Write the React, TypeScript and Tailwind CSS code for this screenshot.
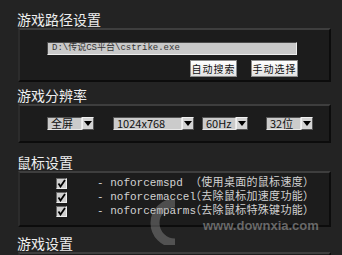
import React from "react";

const CJK = { fontFamily: '"Noto Sans CJK SC", "Noto Sans", sans-serif' };
const MONO = { fontFamily: '"Liberation Mono", "Noto Sans CJK SC", monospace' };

function Title({ children, className }: { children: React.ReactNode; className: string }) {
  return (
    <div className={`ml-[17px] h-[18px] leading-[18px] text-[14px] text-[#eeeeee] ${className}`} style={CJK}>
      {children}
    </div>
  );
}

function Panel({ children, className }: { children?: React.ReactNode; className: string }) {
  return (
    <div
      className={`ml-[18px] w-[313px] bg-[#1c1c1c] border-2 border-t-[#3e3e3e] border-l-[#2c2c2c] border-r-[#0c0c0c] border-b-[#0c0c0c] ${className}`}
    >
      {children}
    </div>
  );
}

function Arrow() {
  return (
    <div className="w-[12px] h-[13px] bg-[#d4d4d4] border border-t-[#f0f0f0] border-l-[#f0f0f0] border-r-[#555] border-b-[#555] flex items-center justify-center">
      <svg width="8" height="5" viewBox="0 0 8 5">
        <path d="M0 0H8L4 5Z" fill="#000" />
      </svg>
    </div>
  );
}

function Select({ label, className }: { label: string; className: string }) {
  return (
    <div className="flex h-[13px]">
      <div
        className={`h-[13px] bg-[#cbcbcb] border border-t-[#555] border-l-[#555] border-b-[#e8e8e8] border-r-[#e8e8e8] text-[11px] leading-[11px] pl-[3px] text-[#111] whitespace-nowrap ${className}`}
        style={CJK}
      >
        {label}
      </div>
      <Arrow />
    </div>
  );
}

function Check() {
  return (
    <div className="w-[11px] h-[11px] bg-[#cfcfcf] border border-t-[#666] border-l-[#666] border-b-[#eee] border-r-[#eee] flex items-center justify-center">
      <svg width="9" height="9" viewBox="0 0 9 9">
        <path d="M1.5 4.5L3.5 7.5L8 1" stroke="#000" strokeWidth="1.8" fill="none" />
      </svg>
    </div>
  );
}

function Btn({ children }: { children: React.ReactNode }) {
  return (
    <div
      className="w-[47px] h-[17px] bg-gradient-to-b from-[#ffffff] to-[#e2e2e2] border border-[#8a8a8a] flex items-center justify-center text-[10px] leading-[10px] tracking-[1px] whitespace-nowrap text-[#111]"
      style={CJK}
    >
      {children}
    </div>
  );
}

function Row({ name, desc }: { name: string; desc: string }) {
  return (
    <div className="flex items-center h-[14px]">
      <div className="ml-[36px]">
        <Check />
      </div>
      <div className="ml-[30px] w-[93px] text-[11px] leading-[12px] text-[#d2d2d2] whitespace-pre" style={MONO}>
        {"- " + name}
      </div>
      <div className="text-[11px] leading-[12px] tracking-[0.3px] text-[#d2d2d2] whitespace-pre" style={MONO}>
        {desc}
      </div>
    </div>
  );
}

export default function App() {
  return (
    <div className="relative w-[342px] h-[255px] overflow-hidden bg-[#232323]">
      <Title className="mt-[10px]">游戏路径设置</Title>
      <Panel className="h-[54px]">
        <div className="pl-[27px] pt-[12px] flex flex-col">
          <div
            className="w-[250px] h-[13px] bg-[#c9c9c9] border border-t-[#4a4a4a] border-l-[#4a4a4a] border-b-[#eeeeee] border-r-[#eeeeee] pl-[4px] text-[9px] leading-[11px] text-[#333] whitespace-nowrap"
            style={MONO}
          >
            D:\传说CS平台\cstrike.exe
          </div>
          <div className="flex mt-[5px] ml-[143px] gap-[14px]">
            <Btn>自动搜索</Btn>
            <Btn>手动选择</Btn>
          </div>
        </div>
      </Panel>

      <Title className="mt-[4px]">游戏分辨率</Title>
      <Panel className="h-[39px] flex items-center">
        <div className="flex items-center pl-[27px]">
          <Select label="全屏" className="w-[35px]" />
          <div className="ml-[19px]">
            <Select label="1024x768" className="w-[69px]" />
          </div>
          <div className="ml-[8px]">
            <Select label="60Hz" className="w-[34px]" />
          </div>
          <div className="ml-[18px]">
            <Select label="32位" className="w-[35px]" />
          </div>
        </div>
      </Panel>

      <Title className="mt-[10px]">鼠标设置</Title>
      <Panel className="h-[56px] pt-[3px]">
        <Row name="noforcemspd" desc="（使用桌面的鼠标速度）" />
        <Row name="noforcemaccel" desc="（去除鼠标加速度功能）" />
        <Row name="noforcemparms" desc="（去除鼠标特殊键功能）" />
      </Panel>

      <Title className="mt-[7px]">游戏设置</Title>
      <Panel className="h-[40px]" />

      <div className="absolute left-[150px] top-[200px] pointer-events-none opacity-40">
        <svg width="50" height="45" viewBox="0 0 50 45">
          <path d="M25 3A20 20 0 1 0 25 43" stroke="#9a9a9a" strokeWidth="9" fill="none" />
        </svg>
      </div>
      <div
        className="absolute left-[203px] top-[219px] text-[13px] leading-[13px] font-bold text-[#8a8a8a] opacity-70 pointer-events-none"
        style={{ fontFamily: '"Liberation Sans", Arial, sans-serif' }}
      >
        www.downxia.com
      </div>
    </div>
  );
}
